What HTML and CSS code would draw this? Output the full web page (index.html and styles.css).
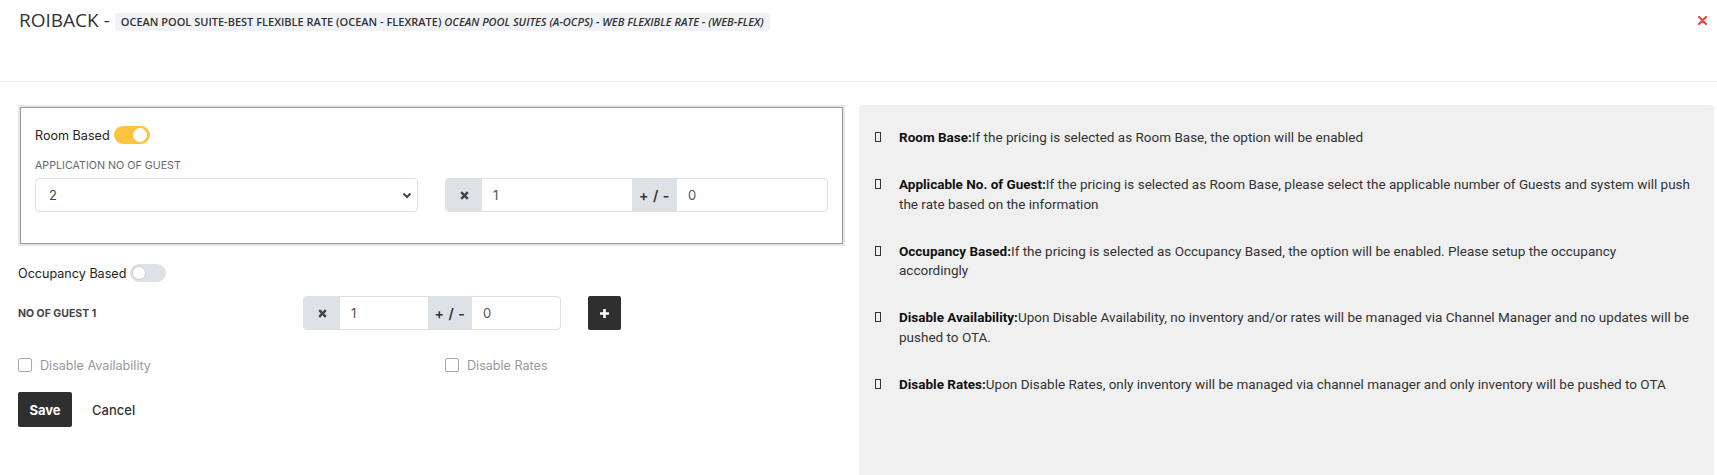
FILE: index.html
```html
<!DOCTYPE html>
<html lang="en">
<head>
  <meta charset="UTF-8">
  <title>Rate mapping</title>
  <link rel="stylesheet" href="styles.css">
</head>
<body>

  <!-- header -->
  <div class="modal-head">
    <h4 class="modal-title">
      <span>ROIBACK -</span>
      <span class="rate-tag">OCEAN POOL SUITE-BEST FLEXIBLE RATE (OCEAN - FLEXRATE) <em>OCEAN POOL SUITES (A-OCPS) - WEB FLEXIBLE RATE - (WEB-FLEX)</em></span>
    </h4>
    <span class="close-x">
      <svg width="9" height="9" viewBox="0 0 9 9"><path d="M1 1L8 8M8 1L1 8" stroke="#f4473a" stroke-width="2.2" stroke-linecap="round"/></svg>
    </span>
  </div>

  <div class="modal-body">

    <!-- left : form -->
    <div class="form-col">
      <div class="room-box">
        <div class="switch-row">
          <span>Room Based</span>
          <span class="switch on"></span>
        </div>
        <div class="field-label">APPLICATION NO OF GUEST</div>
        <div class="two-col">
          <div class="select-box">
            <span>2</span>
            <svg width="10" height="7" viewBox="0 0 10 7"><path d="M1.5 1.5L5 5L8.5 1.5" fill="none" stroke="#444" stroke-width="2"/></svg>
          </div>
          <div class="input-group">
            <span class="addon addon-x">
              <svg width="9" height="9" viewBox="0 0 9 9"><path d="M1.2 1.2L7.8 7.8M7.8 1.2L1.2 7.8" stroke="#444" stroke-width="2.4"/></svg>
            </span>
            <span class="field">1</span>
            <span class="addon addon-pm">+ / -</span>
            <span class="field">0</span>
          </div>
        </div>
      </div>

      <div class="switch-row occ-row">
        <span>Occupancy Based</span>
        <span class="switch"></span>
      </div>

      <div class="guest-row">
        <label class="guest-label">NO OF GUEST 1</label>
        <div class="input-group small">
          <span class="addon addon-x">
            <svg width="9" height="9" viewBox="0 0 9 9"><path d="M1.2 1.2L7.8 7.8M7.8 1.2L1.2 7.8" stroke="#444" stroke-width="2.4"/></svg>
          </span>
          <span class="field f1">1</span>
          <span class="addon addon-pm">+ / -</span>
          <span class="field f2">0</span>
        </div>
        <button class="btn-plus">
          <svg width="11" height="11" viewBox="0 0 11 11"><path d="M5.5 1V10M1 5.5H10" stroke="#fff" stroke-width="2.6"/></svg>
        </button>
      </div>

      <div class="two-col checks">
        <label class="check"><span class="box"></span>Disable Availability</label>
        <label class="check"><span class="box"></span>Disable Rates</label>
      </div>

      <div class="actions">
        <button class="btn-save">Save</button>
        <button class="btn-cancel">Cancel</button>
      </div>
    </div>

    <!-- right : help -->
    <div class="help-panel">
      <ul>
        <li><span class="bullet"></span><p><b>Room Base:</b>If the pricing is selected as Room Base, the option will be enabled</p></li>
        <li><span class="bullet"></span><p><b>Applicable No. of Guest:</b>If the pricing is selected as Room Base, please select the applicable number of Guests and system will push the rate based on the information</p></li>
        <li><span class="bullet"></span><p><b>Occupancy Based:</b>If the pricing is selected as Occupancy Based, the option will be enabled. Please setup the occupancy<br>accordingly</p></li>
        <li><span class="bullet"></span><p><b>Disable Availability:</b>Upon Disable Availability, no inventory and/or rates will be managed via Channel Manager and no updates will be pushed to OTA.</p></li>
        <li><span class="bullet"></span><p><b>Disable Rates:</b>Upon Disable Rates, only inventory will be managed via channel manager and only inventory will be pushed to OTA</p></li>
      </ul>
    </div>

  </div>

</body>
</html>
```

FILE: styles.css
```css
body {
  margin: 0;
  background: white;
  color: #333;
  font-family: Inter, "Noto Sans", sans-serif;
  font-size: 12.6px;
  overflow: hidden;
}

/* header */
.modal-head {
  display: flex;
  justify-content: space-between;
  align-items: flex-start;
  height: 82px;
  box-sizing: border-box;
  padding: 9px 10px 0 19px;
  border-bottom: 1px solid #eeeeee;
}

.modal-title {
  display: flex;
  align-items: flex-start;
  margin: 0;
  font-family: "Open Sans", sans-serif;
  font-size: 19px;
  font-weight: 400;
  line-height: 22px;
  color: #333;
}

.rate-tag {
  margin: 4px 0 0 5px;
  height: 18px;
  line-height: 18px;
  padding: 0 6px;
  background: #f0f2f5;
  border-radius: 3px;
  font-size: 11px;
  font-weight: 600;
}

.rate-tag em {
  font-style: italic;
}

.close-x {
  margin-top: 7px;
  line-height: 0;
}

/* layout */
.modal-body {
  display: grid;
  grid-template-columns: 827px 855px;
  column-gap: 14px;
  padding: 23px 0 0 18px;
}

.room-box {
  margin: 2px 2px 0;
  border: 1px solid #9a9a9a;
  box-shadow: 0 0 0 2px #e6e6e6;
  padding: 18px 14px 31px;
}

.switch-row {
  display: flex;
  align-items: center;
  gap: 4px;
  height: 18px;
  color: #222;
}

.switch {
  position: relative;
  width: 36px;
  height: 18px;
  border-radius: 9px;
  background: #dee2e6;
}

.switch::after {
  content: "";
  position: absolute;
  top: 2px;
  left: 2px;
  width: 12px;
  height: 12px;
  border-radius: 50%;
  background: white;
  border: 1px solid #c9ced3;
}

.switch.on {
  background: #ffc43d;
}

.switch.on::after {
  left: auto;
  right: 3px;
  border-color: white;
}

.field-label {
  margin: 15px 0 5px;
  line-height: 14px;
  font-size: 10.7px;
  color: #666;
}

.two-col {
  display: grid;
  grid-template-columns: 1fr 1fr;
  column-gap: 27px;
}

.select-box {
  display: flex;
  justify-content: space-between;
  align-items: center;
  height: 34px;
  box-sizing: border-box;
  padding: 0 5px 0 13px;
  border: 1px solid #dcdfe3;
  border-radius: 4px;
  color: #444;
  font-size: 13px;
}

.input-group {
  display: flex;
  height: 34px;
  box-sizing: border-box;
  border: 1px solid #dcdfe3;
  border-radius: 4px;
  overflow: hidden;
}

.addon {
  display: flex;
  align-items: center;
  justify-content: center;
  background: #dde2e6;
  color: #333;
  font-weight: 600;
  font-size: 14px;
}

.addon-x {
  width: 36px;
}

.addon-pm {
  width: 45px;
  letter-spacing: 0.5px;
}

.field {
  flex: 1;
  display: flex;
  align-items: center;
  padding-left: 11px;
  color: #555;
  font-size: 13px;
}

.occ-row {
  margin-top: 20px;
}

.guest-row {
  display: flex;
  align-items: center;
  margin-top: 14px;
  height: 34px;
}

.guest-label {
  width: 285px;
  font-size: 10.5px;
  font-weight: 700;
  color: #444;
}

.input-group.small {
  width: 258px;
}

.input-group.small .addon-pm {
  width: 44px;
}

.input-group.small .f1 {
  flex: 0 0 88px;
  box-sizing: border-box;
}

.btn-plus {
  margin-left: 27px;
  width: 33px;
  height: 34px;
  border: none;
  border-radius: 2px;
  background: #2f2f2f;
  line-height: 0;
  padding: 0;
}

.checks {
  margin-top: 28px;
  width: 827px;
  grid-template-columns: 400px 400px;
}

.check {
  display: flex;
  align-items: center;
  gap: 8px;
  height: 14px;
  color: #999;
}

.check .box {
  width: 14px;
  height: 14px;
  box-sizing: border-box;
  border: 1px solid #aaa;
  border-radius: 2px;
}

.actions {
  display: flex;
  align-items: center;
  margin-top: 20px;
}

.btn-save {
  width: 54px;
  height: 35px;
  border: none;
  border-radius: 2px;
  background: #2f2f2f;
  color: white;
  font-family: Inter, sans-serif;
  font-size: 13px;
  font-weight: 700;
}

.btn-cancel {
  margin-left: 20px;
  padding: 0;
  border: none;
  background: none;
  color: #333;
  font-family: Inter, sans-serif;
  font-size: 13px;
  font-weight: 500;
}

/* right panel */
.help-panel {
  height: 370px;
  box-sizing: border-box;
  padding: 23px 18px 0 16px;
  background: #f0f0f0;
  border-radius: 4px 4px 0 0;
  font-family: Roboto, sans-serif;
  font-size: 13.5px;
  color: #333;
}

.help-panel ul {
  list-style: none;
  margin: 0;
  padding: 0;
}

.help-panel li {
  display: flex;
  gap: 18px;
  margin-bottom: 27.5px;
}

.help-panel p {
  margin: 0;
  line-height: 19.5px;
}

.help-panel b {
  color: #111;
}

.bullet {
  flex: none;
  width: 6px;
  height: 10px;
  box-sizing: border-box;
  margin-top: 4px;
  border: 1px solid #333;
}
```
